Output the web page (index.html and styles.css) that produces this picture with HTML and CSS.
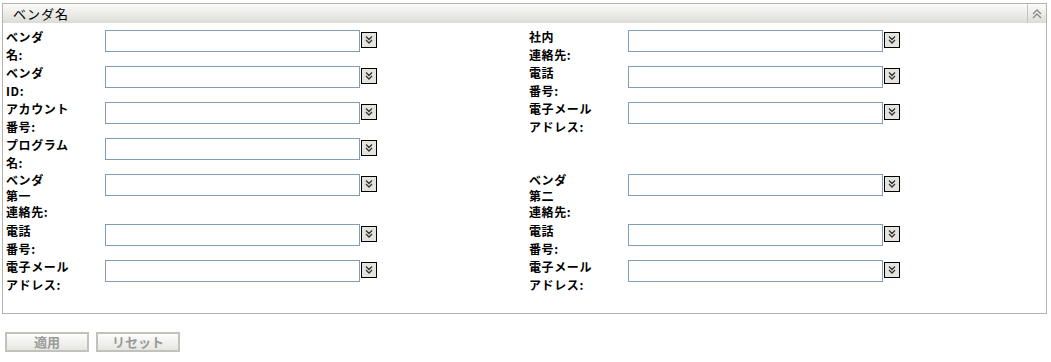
FILE: index.html
```html
<!DOCTYPE html>
<html>
<head>
  <meta charset="UTF-8">
  <title>ベンダ名</title>
  <link rel="stylesheet" href="styles.css">
</head>
<body>
  <div class="panel">
    <div class="panel-header">
      <span class="panel-title">ベンダ名</span>
      <span class="collapse-button">
        <svg width="12" height="12" viewBox="0 0 12 12"><path d="M2 6 L6 2 L10 6 M2 10 L6 6 L10 10" fill="none" stroke="#8a8a8a" stroke-width="1.4"/></svg>
      </span>
    </div>
    <div class="panel-body">
      <div class="field">
        <label class="field-label">ベンダ<br>名:</label>
        <input type="text" class="field-input">
        <span class="lookup"><svg width="10" height="10" viewBox="0 0 10 10"><path d="M2 1.5 L5 4.5 L8 1.5 M2 5 L5 8 L8 5" fill="none" stroke="#333" stroke-width="1.3"/></svg></span>
      </div>
      <div class="field">
        <label class="field-label">社内<br>連絡先:</label>
        <input type="text" class="field-input">
        <span class="lookup"><svg width="10" height="10" viewBox="0 0 10 10"><path d="M2 1.5 L5 4.5 L8 1.5 M2 5 L5 8 L8 5" fill="none" stroke="#333" stroke-width="1.3"/></svg></span>
      </div>

      <div class="field">
        <label class="field-label">ベンダ<br>ID:</label>
        <input type="text" class="field-input">
        <span class="lookup"><svg width="10" height="10" viewBox="0 0 10 10"><path d="M2 1.5 L5 4.5 L8 1.5 M2 5 L5 8 L8 5" fill="none" stroke="#333" stroke-width="1.3"/></svg></span>
      </div>
      <div class="field">
        <label class="field-label">電話<br>番号:</label>
        <input type="text" class="field-input">
        <span class="lookup"><svg width="10" height="10" viewBox="0 0 10 10"><path d="M2 1.5 L5 4.5 L8 1.5 M2 5 L5 8 L8 5" fill="none" stroke="#333" stroke-width="1.3"/></svg></span>
      </div>

      <div class="field">
        <label class="field-label">アカウント<br>番号:</label>
        <input type="text" class="field-input">
        <span class="lookup"><svg width="10" height="10" viewBox="0 0 10 10"><path d="M2 1.5 L5 4.5 L8 1.5 M2 5 L5 8 L8 5" fill="none" stroke="#333" stroke-width="1.3"/></svg></span>
      </div>
      <div class="field">
        <label class="field-label">電子メール<br>アドレス:</label>
        <input type="text" class="field-input">
        <span class="lookup"><svg width="10" height="10" viewBox="0 0 10 10"><path d="M2 1.5 L5 4.5 L8 1.5 M2 5 L5 8 L8 5" fill="none" stroke="#333" stroke-width="1.3"/></svg></span>
      </div>

      <div class="field">
        <label class="field-label">プログラム<br>名:</label>
        <input type="text" class="field-input">
        <span class="lookup"><svg width="10" height="10" viewBox="0 0 10 10"><path d="M2 1.5 L5 4.5 L8 1.5 M2 5 L5 8 L8 5" fill="none" stroke="#333" stroke-width="1.3"/></svg></span>
      </div>
      <div class="field"></div>

      <div class="field tall">
        <label class="field-label">ベンダ<br>第一<br>連絡先:</label>
        <input type="text" class="field-input">
        <span class="lookup"><svg width="10" height="10" viewBox="0 0 10 10"><path d="M2 1.5 L5 4.5 L8 1.5 M2 5 L5 8 L8 5" fill="none" stroke="#333" stroke-width="1.3"/></svg></span>
      </div>
      <div class="field tall">
        <label class="field-label">ベンダ<br>第二<br>連絡先:</label>
        <input type="text" class="field-input">
        <span class="lookup"><svg width="10" height="10" viewBox="0 0 10 10"><path d="M2 1.5 L5 4.5 L8 1.5 M2 5 L5 8 L8 5" fill="none" stroke="#333" stroke-width="1.3"/></svg></span>
      </div>

      <div class="field">
        <label class="field-label">電話<br>番号:</label>
        <input type="text" class="field-input">
        <span class="lookup"><svg width="10" height="10" viewBox="0 0 10 10"><path d="M2 1.5 L5 4.5 L8 1.5 M2 5 L5 8 L8 5" fill="none" stroke="#333" stroke-width="1.3"/></svg></span>
      </div>
      <div class="field">
        <label class="field-label">電話<br>番号:</label>
        <input type="text" class="field-input">
        <span class="lookup"><svg width="10" height="10" viewBox="0 0 10 10"><path d="M2 1.5 L5 4.5 L8 1.5 M2 5 L5 8 L8 5" fill="none" stroke="#333" stroke-width="1.3"/></svg></span>
      </div>

      <div class="field">
        <label class="field-label">電子メール<br>アドレス:</label>
        <input type="text" class="field-input">
        <span class="lookup"><svg width="10" height="10" viewBox="0 0 10 10"><path d="M2 1.5 L5 4.5 L8 1.5 M2 5 L5 8 L8 5" fill="none" stroke="#333" stroke-width="1.3"/></svg></span>
      </div>
      <div class="field">
        <label class="field-label">電子メール<br>アドレス:</label>
        <input type="text" class="field-input">
        <span class="lookup"><svg width="10" height="10" viewBox="0 0 10 10"><path d="M2 1.5 L5 4.5 L8 1.5 M2 5 L5 8 L8 5" fill="none" stroke="#333" stroke-width="1.3"/></svg></span>
      </div>
    </div>
  </div>

  <div class="button-group">
    <button class="form-button" disabled>適用</button>
    <button class="form-button" disabled>リセット</button>
  </div>
</body>
</html>
```

FILE: styles.css
```css
body {
  margin: 3px 4px 0 2px;
  font-family: "Noto Sans CJK JP", "Liberation Sans", sans-serif;
  font-size: 12px;
  color: #000;
  background: #fff;
}
.panel {
  border: 1px solid #b4b4ae;
  box-sizing: border-box;
  height: 311px;
}
.panel-header {
  display: flex;
  align-items: center;
  justify-content: space-between;
  height: 19px;
  background: linear-gradient(#fbfbfa, #dcdcd7);
}
.panel-title {
  padding-left: 10px;
  font-size: 13px;
  line-height: 19px;
  letter-spacing: 1px;
}
.collapse-button {
  display: flex;
  align-items: center;
  justify-content: center;
  width: 18px;
  height: 19px;
  border-left: 1px solid #c4c4be;
}
.panel-body {
  display: grid;
  grid-template-columns: 523px 1fr;
  padding: 5px 0 0 0;
}
.field {
  display: flex;
  align-items: flex-start;
  height: 36px;
}
.field.tall {
  height: 50px;
}
.field-label {
  width: 99px;
  padding-left: 3px;
  line-height: 18px;
  font-weight: bold;
  letter-spacing: 0.6px;
}
.tall .field-label {
  line-height: 16px;
}
.field-input {
  width: 255px;
  height: 22px;
  margin: 2px 0 0 0;
  padding: 0 3px;
  border: 1px solid #7f9db9;
  box-sizing: border-box;
  font-family: inherit;
}
.lookup {
  display: flex;
  align-items: center;
  justify-content: center;
  width: 16px;
  height: 16px;
  margin: 4px 0 0 1px;
  border: 1px solid #000;
  box-sizing: border-box;
  background: #e4e3de;
}
.button-group {
  display: flex;
  gap: 7px;
  margin-top: 18px;
  padding-left: 3px;
}
.form-button {
  width: 84px;
  height: 20px;
  padding: 0;
  border: 2px solid #c2c2bc;
  background: linear-gradient(#fdfdfc, #e6e6e1);
  color: #9a9a9a;
  font-family: inherit;
  font-size: 13px;
  font-weight: bold;
  line-height: 16px;
}
```
